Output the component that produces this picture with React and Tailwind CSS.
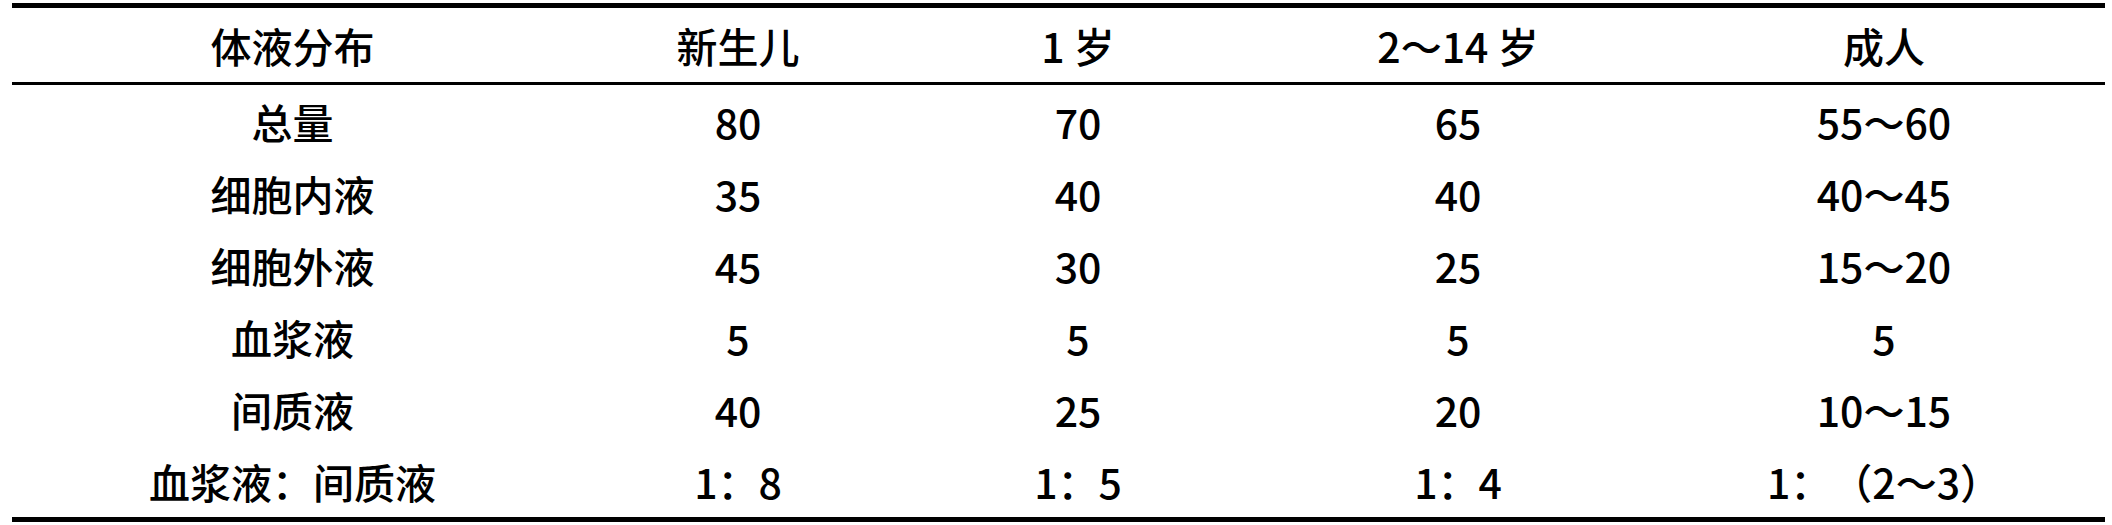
const headers = ['体液分布', '新生儿', '1 岁', '2～14 岁', '成人'];

const rows = [
  ['总量', '80', '70', '65', '55～60'],
  ['细胞内液', '35', '40', '40', '40～45'],
  ['细胞外液', '45', '30', '25', '15～20'],
  ['血浆液', '5', '5', '5', '5'],
  ['间质液', '40', '25', '20', '10～15'],
  ['血浆液：间质液', '1：8', '1：5', '1：4', '1：（2～3）'],
];

const cols = 'grid grid-cols-[561px_330px_350px_410px_442px]';

export default function App() {
  return (
    <div
      className="w-[2112px] h-[525px] bg-white text-black pt-[3px] pl-[12px] pr-[7px] text-[41px] leading-none font-medium [text-spacing-trim:space-all]"
      style={{ fontFamily: '"Noto Sans CJK SC", "Noto Sans", sans-serif' }}
    >
      {/* top rule */}
      <div className="h-[5px] bg-black" />
      {/* header */}
      <div className={`${cols} h-[74px] items-center`}>
        {headers.map((h, i) => (
          <div key={i} className="text-center whitespace-pre">{h}</div>
        ))}
      </div>
      <div className="h-[3px] bg-black" />
      {/* body */}
      {rows.map((r, ri) => (
        <div key={ri} className={`${cols} h-[72px] items-center`}>
          {r.map((c, ci) => (
            <div key={ci} className="text-center whitespace-pre">{c}</div>
          ))}
        </div>
      ))}
      {/* bottom rule */}
      <div className="h-[5px] bg-black" />
    </div>
  );
}
